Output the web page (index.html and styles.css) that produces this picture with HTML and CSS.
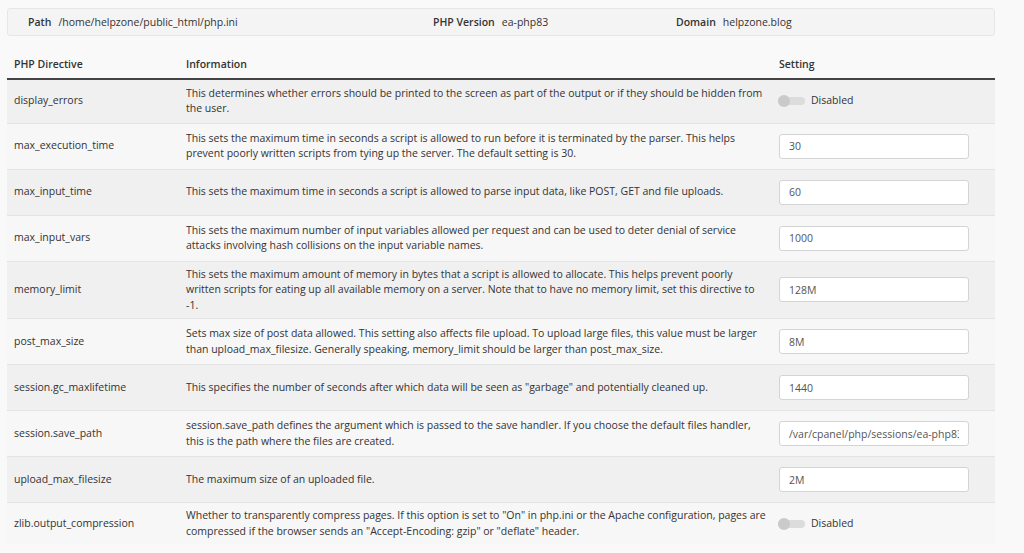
FILE: index.html
```html
<!DOCTYPE html>
<html>
<head>
<meta charset="utf-8">
<link rel="stylesheet" href="styles.css">
</head>
<body>
<div class="info-panel">
  <div class="info-item"><span class="lbl">Path</span><span class="val">/home/helpzone/public_html/php.ini</span></div>
  <div class="info-item"><span class="lbl">PHP Version</span><span class="val">ea-php83</span></div>
  <div class="info-item"><span class="lbl">Domain</span><span class="val">helpzone.blog</span></div>
</div>
<table class="directives">
  <colgroup><col class="c1"><col class="c2"><col class="c3"></colgroup>
  <thead>
    <tr><th>PHP Directive</th><th>Information</th><th>Setting</th></tr>
  </thead>
  <tbody>
    <tr><td>display_errors</td><td class="info">This determines whether errors should be printed to the screen as part of the output or if they should be hidden from the user.</td><td><span class="toggle"><span class="track"><span class="knob"></span></span><span class="tlabel">Disabled</span></span></td></tr>
    <tr><td>max_execution_time</td><td class="info">This sets the maximum time in seconds a script is allowed to run before it is terminated by the parser. This helps prevent poorly written scripts from tying up the server. The default setting is 30.</td><td><input class="field" type="text" value="30"></td></tr>
    <tr><td>max_input_time</td><td class="info">This sets the maximum time in seconds a script is allowed to parse input data, like POST, GET and file uploads.</td><td><input class="field" type="text" value="60"></td></tr>
    <tr><td>max_input_vars</td><td class="info">This sets the maximum number of input variables allowed per request and can be used to deter denial of service attacks involving hash collisions on the input variable names.</td><td><input class="field" type="text" value="1000"></td></tr>
    <tr><td>memory_limit</td><td class="info">This sets the maximum amount of memory in bytes that a script is allowed to allocate. This helps prevent poorly written scripts for eating up all available memory on a server. Note that to have no memory limit, set this directive to -1.</td><td><input class="field" type="text" value="128M"></td></tr>
    <tr><td>post_max_size</td><td class="info">Sets max size of post data allowed. This setting also affects file upload. To upload large files, this value must be larger than upload_max_filesize. Generally speaking, memory_limit should be larger than post_max_size.</td><td><input class="field" type="text" value="8M"></td></tr>
    <tr><td>session.gc_maxlifetime</td><td class="info">This specifies the number of seconds after which data will be seen as "garbage" and potentially cleaned up.</td><td><input class="field" type="text" value="1440"></td></tr>
    <tr><td>session.save_path</td><td class="info">session.save_path defines the argument which is passed to the save handler. If you choose the default files handler, this is the path where the files are created.</td><td><input class="field" type="text" value="/var/cpanel/php/sessions/ea-php83"></td></tr>
    <tr><td>upload_max_filesize</td><td class="info">The maximum size of an uploaded file.</td><td><input class="field" type="text" value="2M"></td></tr>
    <tr><td>zlib.output_compression</td><td class="info">Whether to transparently compress pages. If this option is set to "On" in php.ini or the Apache configuration, pages are compressed if the browser sends an "Accept-Encoding: gzip" or "deflate" header.</td><td><span class="toggle"><span class="track"><span class="knob"></span></span><span class="tlabel">Disabled</span></span></td></tr>
  </tbody>
</table>
</body>
</html>
```
FILE: styles.css
```css
html, body {
  background: #f9f9f9;
}
body {
  margin: 8px 29px 0 7px;
  font-family: "Open Sans", "Liberation Sans", sans-serif;
  font-size: 10.5px;
  color: #333;
  line-height: 15.5px;
}
.info-panel {
  display: grid;
  grid-template-columns: 405px 243px 1fr;
  padding: 6px 0 4px 20px;
  height: 16px;
  background: #f4f4f4;
  border: 1px solid #e6e6e6;
  border-radius: 3px;
  align-items: center;
}
.info-item .lbl {
  font-weight: 600;
  margin-right: 7px;
}
.directives {
  width: 100%;
  border-collapse: collapse;
  table-layout: fixed;
  margin-top: 14px;
}
.c1 { width: 172px; }
.c3 { width: 223px; }
th {
  text-align: left;
  font-weight: 600;
  padding: 7px 7px 5px;
  height: 15px;
  border-bottom: 2px solid #444;
}
td {
  padding: 5px 7px;
  vertical-align: middle;
  border-bottom: 1px solid #e3e3e3;
}
td.info { padding-right: 3px; }
tbody tr:nth-child(odd) td { background: #f0f0f0; }
tbody tr:nth-child(even) td { background: #f7f7f7; }
tbody tr:last-child td { border-bottom: none; }
tbody tr:first-child td { padding-top: 6px; padding-bottom: 6px; }
.field {
  display: block;
  box-sizing: border-box;
  width: 190px;
  height: 25px;
  margin: 5px 0;
  padding: 0 9px;
  border: 1px solid #d4d4d4;
  border-radius: 3px;
  background: #fff;
  font-family: "Open Sans", "Liberation Sans", sans-serif;
  font-size: 10.5px;
  color: #555;
}
.toggle {
  display: flex;
  align-items: center;
  gap: 6px;
}
.track {
  position: relative;
  width: 27px;
  height: 8px;
  border-radius: 4px;
  background: #dcdcdc;
  margin-left: -1px;
}
.knob {
  position: absolute;
  left: 0;
  top: -2px;
  width: 12px;
  height: 12px;
  border-radius: 50%;
  background: #cacaca;
}
.tlabel { color: #333; }
```
